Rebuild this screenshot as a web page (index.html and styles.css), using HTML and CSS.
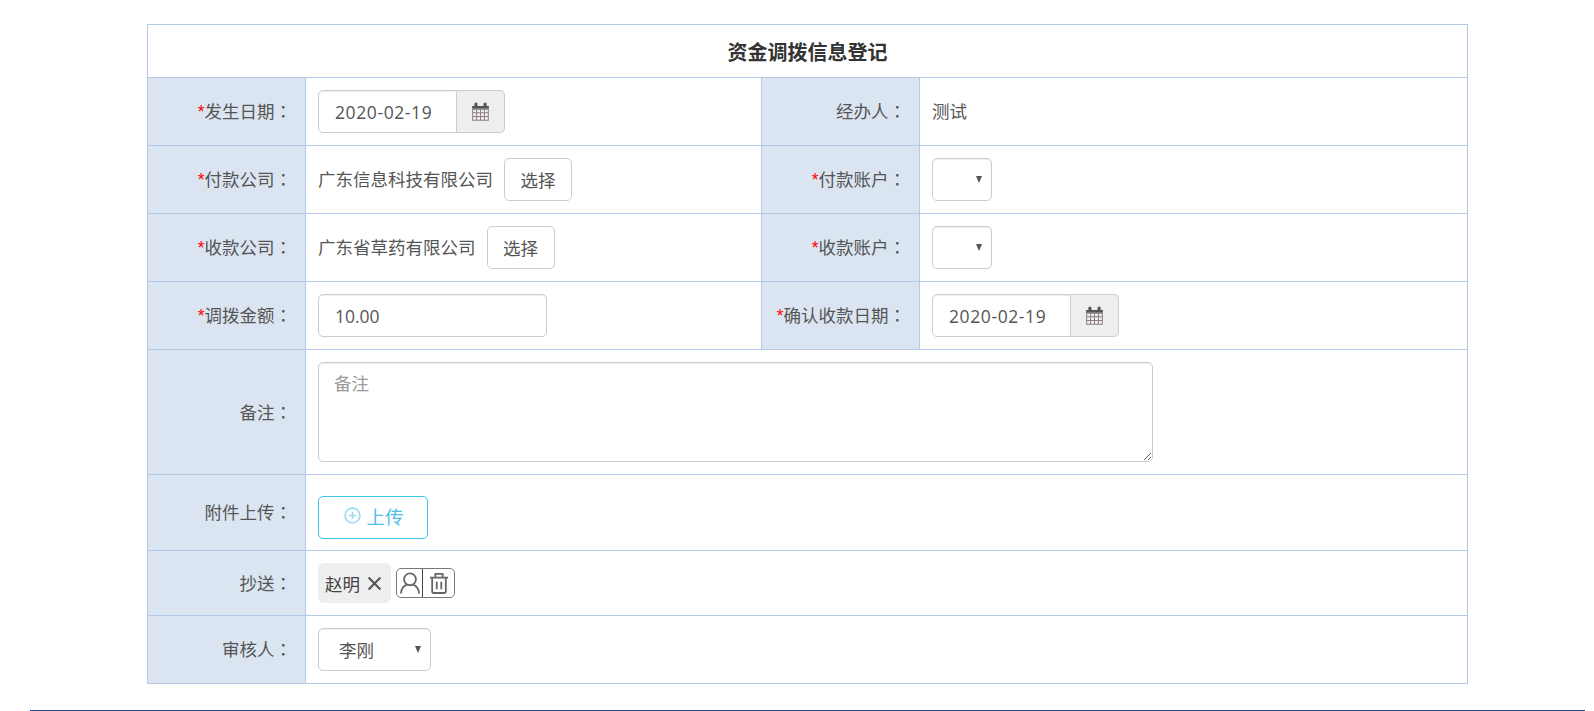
FILE: index.html
```html
<!DOCTYPE html>
<html lang="zh-CN">
<head>
<meta charset="utf-8">
<title>资金调拨信息登记</title>
<link rel="stylesheet" href="styles.css">
</head>
<body>
<main class="page">
<table class="form-table">
  <colgroup><col class="c1"><col class="c2"><col class="c3"><col class="c4"></colgroup>
  <tr class="r-title"><th colspan="4" class="title">资金调拨信息登记</th></tr>
  <tr class="r-std">
    <td class="label"><span class="req">*</span>发生日期<span class="colon" lang="zh-TW">：</span></td>
    <td><div class="date"><input class="control date-input" value="2020-02-19"><span class="addon"><svg class="cal" viewBox="0 0 17 17"><path class="cal-head" d="M1 3.500h2V1.800a1.200 1.200 0 0 1 2.800 0v1.700h5.400V1.800a1.200 1.200 0 0 1 2.800 0v1.700h2V6H1z"/><path class="cal-grid" d="M1.500 6.500h14v9.800h-14zM1.500 9.600h14M1.500 12.900h14M5 6.500v9.800M8.500 6.500v9.800M12 6.500v9.800"/></svg></span></div></td>
    <td class="label">经办人<span class="colon" lang="zh-TW">：</span></td>
    <td><span class="plain">测试</span></td>
  </tr>
  <tr class="r-std">
    <td class="label"><span class="req">*</span>付款公司<span class="colon" lang="zh-TW">：</span></td>
    <td><div class="inline"><span class="plain">广东信息科技有限公司</span><button class="btn" type="button">选择</button></div></td>
    <td class="label"><span class="req">*</span>付款账户<span class="colon" lang="zh-TW">：</span></td>
    <td><div class="select-wrap w-s"><select class="control select"></select></div></td>
  </tr>
  <tr class="r-std">
    <td class="label"><span class="req">*</span>收款公司<span class="colon" lang="zh-TW">：</span></td>
    <td><div class="inline"><span class="plain">广东省草药有限公司</span><button class="btn" type="button">选择</button></div></td>
    <td class="label"><span class="req">*</span>收款账户<span class="colon" lang="zh-TW">：</span></td>
    <td><div class="select-wrap w-s"><select class="control select"></select></div></td>
  </tr>
  <tr class="r-std">
    <td class="label"><span class="req">*</span>调拨金额<span class="colon" lang="zh-TW">：</span></td>
    <td><input class="control amount" value="10.00"></td>
    <td class="label"><span class="req">*</span>确认收款日期<span class="colon" lang="zh-TW">：</span></td>
    <td><div class="date"><input class="control date-input" value="2020-02-19"><span class="addon"><svg class="cal" viewBox="0 0 17 17"><path class="cal-head" d="M1 3.500h2V1.800a1.200 1.200 0 0 1 2.800 0v1.700h5.400V1.800a1.200 1.200 0 0 1 2.800 0v1.700h2V6H1z"/><path class="cal-grid" d="M1.500 6.500h14v9.800h-14zM1.500 9.600h14M1.500 12.900h14M5 6.500v9.800M8.500 6.500v9.800M12 6.500v9.800"/></svg></span></div></td>
  </tr>
  <tr class="r-note">
    <td class="label">备注<span class="colon" lang="zh-TW">：</span></td>
    <td colspan="3"><textarea class="control note" placeholder="备注"></textarea></td>
  </tr>
  <tr class="r-upload">
    <td class="label">附件上传<span class="colon" lang="zh-TW">：</span></td>
    <td colspan="3" class="upload-cell"><button class="upload" type="button"><svg class="plus" viewBox="0 0 16 16"><circle cx="8" cy="8" r="7"/><path d="M8 4.600v6.800M4.600 8h6.800"/></svg>上传</button></td>
  </tr>
  <tr class="r-cc">
    <td class="label">抄送<span class="colon" lang="zh-TW">：</span></td>
    <td colspan="3"><div class="cc">
      <span class="tag">赵明<svg class="x" viewBox="0 0 14 14"><path d="M1.500 1.500l11 11M12.500 1.500l-11 11"/></svg></span>
      <span class="tools">
        <span class="tool tool-user"><svg viewBox="0 0 22 24"><circle cx="11" cy="8" r="6.500"/><path d="M1 23.500c.4-5.500 3-8.500 6.500-9.800M21 23.500c-.4-5.500-3-8.500-6.500-9.800"/></svg></span>
        <span class="tool"><svg viewBox="0 0 22 24"><path d="M1 6h20M7 5.500V2h8v3.500M3.500 6v15a2 2 0 0 0 2 2h11a2 2 0 0 0 2-2V6M8.500 10.500v8.500M13.500 10.500v8.500"/></svg></span>
      </span>
    </div></td>
  </tr>
  <tr class="r-std">
    <td class="label">审核人<span class="colon" lang="zh-TW">：</span></td>
    <td colspan="3"><div class="select-wrap w-m"><select class="control select"><option>李刚</option></select></div></td>
  </tr>
</table>
<div class="footer-rule"></div>
</main>
</body>
</html>
```
FILE: styles.css
```css
* { box-sizing: border-box; }
html, body { margin: 0; height: 100%; background: #fff; overflow: hidden; }
body { font-family: "Open Sans", "Noto Sans CJK SC", sans-serif; font-size: 17.5px; color: #555; }
.page { padding: 24px 0 0; }
.form-table {
  border-collapse: collapse;
  table-layout: fixed;
  width: 1321px;
  margin-left: 147px;
}
.c1 { width: 158px; }
.c2 { width: 456px; }
.c3 { width: 158px; }
.form-table th, .form-table td {
  border: 1px solid #b4c9ea;
  padding: 0 12px;
  vertical-align: middle;
  font-weight: 400;
}
.r-title { height: 53px; }
.r-std { height: 68px; }
.r-note { height: 125px; }
.r-upload { height: 76px; }
.r-cc { height: 65px; }
.form-table .title { text-align: center; font-size: 20px; font-weight: 700; color: #333; }
.form-table .label { background: #dbe5f1; text-align: right; padding: 0 13px 2px 0; color: #555; }
.colon { font-family: "Noto Sans CJK TC", sans-serif; }
.plain { display: block; padding-bottom: 3px; }
.req { color: #f00; font-family: "Liberation Sans", sans-serif; }
.control {
  font: inherit;
  color: #555;
  background: #fff;
  border: 1px solid #ccc;
  border-radius: 5px;
  height: 43px;
  box-shadow: inset 0 1px 1px rgba(0,0,0,.075);
  outline: none;
}
.date { display: flex; width: 187px; }
.date-input { flex: 1; min-width: 0; width: 139px; padding: 0 15px 0 16px; border-radius: 5px 0 0 5px; letter-spacing: .6px; }
.addon {
  width: 48px; height: 43px; flex: none;
  display: flex; align-items: center; justify-content: center;
  background: #eee; border: 1px solid #ccc; border-left: 0; border-radius: 0 5px 5px 0;
}
.cal { width: 19px; height: 19px; }
.cal-head { fill: #555; }
.cal-grid { fill: #f2eee9; stroke: #8a7f88; stroke-width: .9; }
.inline { display: flex; align-items: center; gap: 11px; }
.btn {
  font: inherit; color: #555; background: #fff;
  border: 1px solid #ccc; border-radius: 5px;
  width: 68px; height: 43px; padding: 0;
}
.select-wrap { position: relative; height: 43px; }
.w-s { width: 60px; }
.w-m { width: 113px; }
.select {
  appearance: none; -webkit-appearance: none;
  width: 100%; padding: 0 20px 0 20px;
}
.select-wrap::after {
  content: ""; position: absolute; right: 10px; top: 18px;
  border-left: 3.500px solid transparent; border-right: 3.500px solid transparent;
  border-top: 7px solid #555;
}
.amount { width: 229px; padding: 0 15px 0 16px; }
.note { display: block; width: 835px; height: 100px; padding: 7px 15px; resize: both; }
.note::placeholder { color: #999; }
.upload-cell.upload-cell { vertical-align: top; padding-top: 21px; }
.upload {
  font: inherit; font-size: 18.500px; color: #4dbde6; background: #fff;
  border: 1px solid #3fc5ec; border-radius: 5px;
  width: 110px; height: 43px; padding: 0 0 4px 2px;
  display: flex; align-items: center; justify-content: center; gap: 5px;
}
.plus { width: 17px; height: 17px; fill: none; stroke: #9adcf2; stroke-width: 1.600; }
.cc { display: flex; align-items: center; gap: 5px; }
.tag {
  display: flex; align-items: center; gap: 7px;
  height: 40px; width: 73px; padding-left: 7px;
  background: #eee; border-radius: 6px; color: #444;
}
.x { width: 15px; height: 15px; fill: none; stroke: #555; stroke-width: 2; }
.tools {
  display: flex; width: 59px; height: 30px;
  border: 1px solid #777; border-radius: 5px;
}
.tool { flex: 1; display: flex; align-items: center; justify-content: center; }
.tool-user { flex: none; width: 26px; border-right: 1px solid #444; }
.tool svg { width: 20px; height: 22px; fill: none; stroke: #666; stroke-width: 2; }
.footer-rule { margin: 26px 9px 0 30px; height: 1px; background: #1c4a94; }
```
